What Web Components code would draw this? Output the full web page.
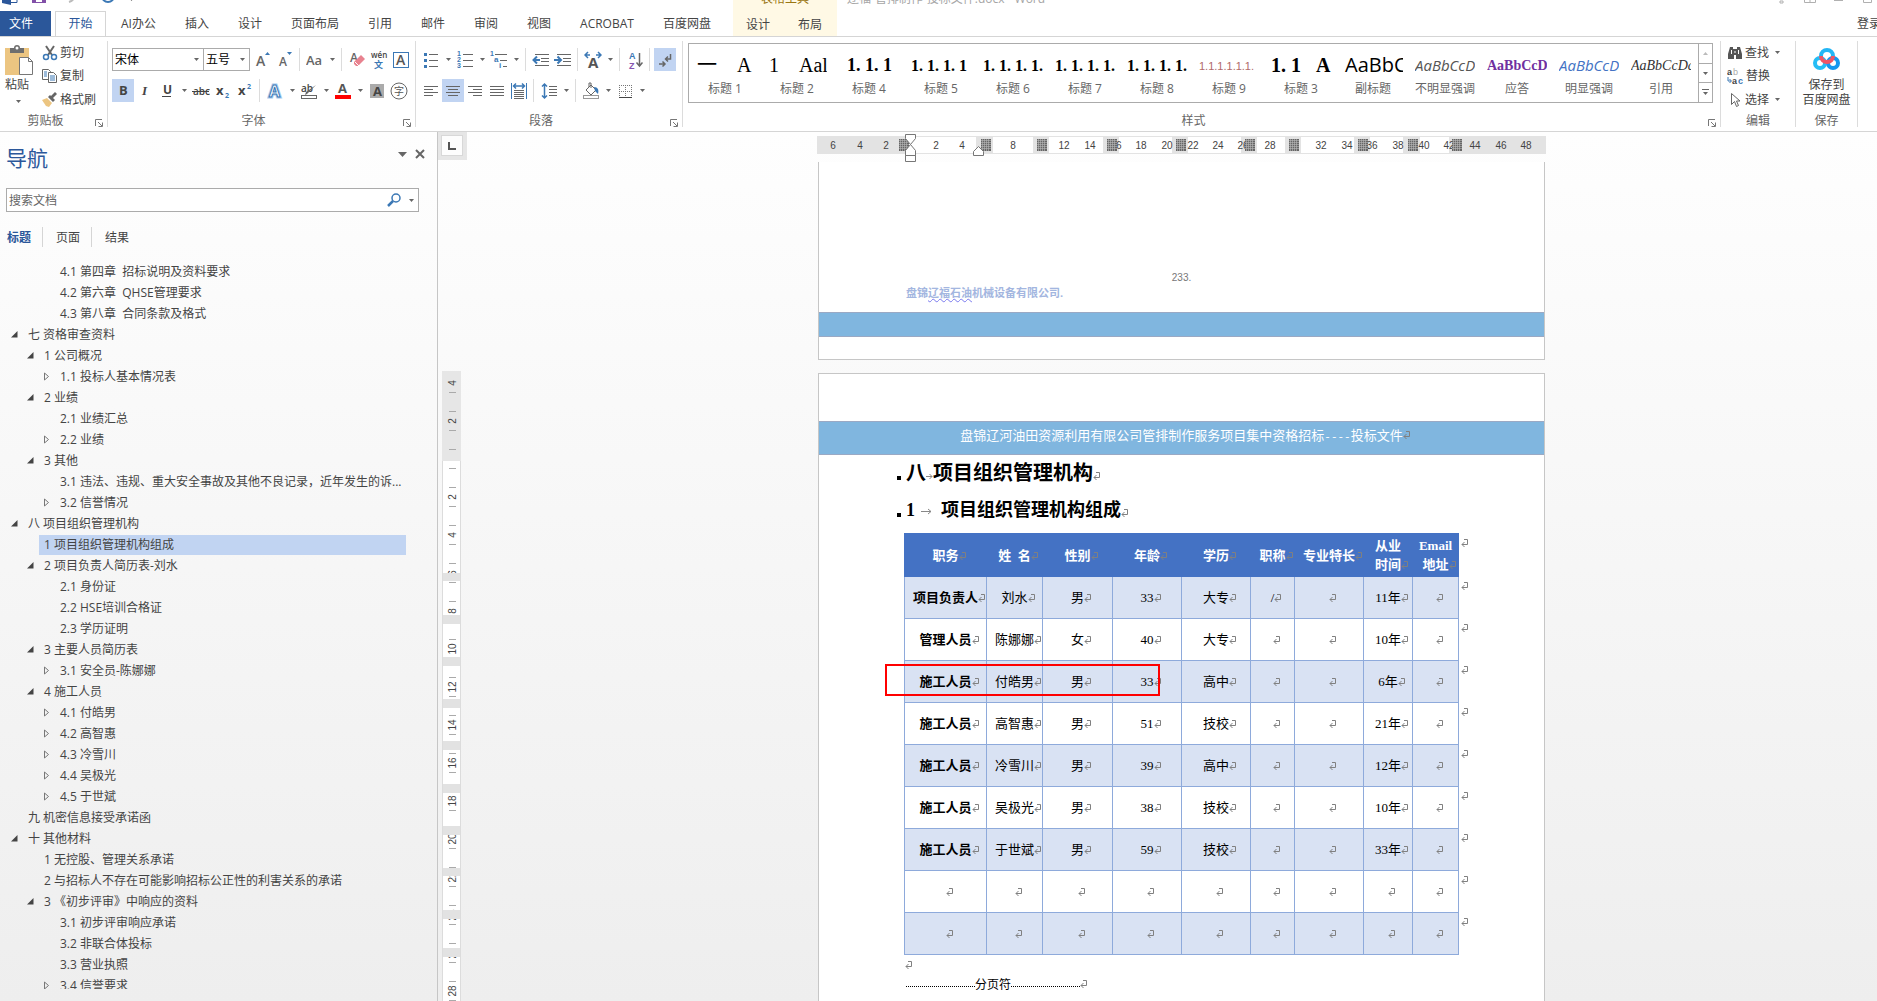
<!DOCTYPE html>
<html lang="zh-CN">
<head>
<meta charset="utf-8">
<title>Word</title>
<style>
html,body{margin:0;height:100%}
body{overflow:hidden;font:12px/16px "Open Sans","Noto Sans CJK SC",sans-serif;color:#444;background:#fff}
</style>
</head>
<body>
<word-app></word-app>
<script>
const BASE = `*{box-sizing:border-box}button,input,select{font:inherit;color:inherit;margin:0}button{border:0;background:none;padding:0;display:inline-flex;align-items:center;white-space:nowrap}svg{display:block;flex:none}`;
function define(name, css, html, after) {
  customElements.define(name, class extends HTMLElement {
    connectedCallback() {
      if (this.shadowRoot) return;
      const root = this.attachShadow({mode: 'open'});
      root.innerHTML = `<style>${BASE}${css}</style>` + (typeof html === 'function' ? html(this) : html);
      if (after) after(this, root);
    }
  });
}
const svg = (w, h, body) => `<svg width="${w}" height="${h}" viewBox="0 0 ${w} ${h}" fill="none" aria-hidden="true">${body}</svg>`;
const G = '#666', B = '#3b78b5';
const T = (x, y, s, size, fill = G, more = '') => `<text x="${x}" y="${y}" font-size="${size}" fill="${fill}" ${more}>${s}</text>`;
const lines = (arr, c = G) => arr.map(([x, y, w]) => `<rect x="${x}" y="${y}" width="${w}" height="1" fill="${c}"/>`).join('');
const caret = svg(5, 3, `<path d="M0 0h5L2.500 3z" fill="${G}"/>`);
const LS = 'font-family="Liberation Sans"';
const ICONS = {
  grow: svg(16,18,T(1,15,'A',14,G,'font-weight="600"')+`<path d="M10 4l2.500-3 2.500 3z" fill="${B}"/>`),
  shrink: svg(16,18,T(2,15,'A',12,G,'font-weight="600"')+`<path d="M10 1h5l-2.500 3z" fill="${B}"/>`),
  aa: svg(18,18,T(0,14,'Aa',13,G,'font-weight="600"')),
  eraser: svg(16,18,T(1,11,'A',12,G,'font-weight="600"')+`<path d="M5 11l7-7 4 4-7 7H7l-2-2z" fill="#e8828f"/><path d="M6 11l4 4" stroke="#fff"/>`),
  wen: svg(18,20,T(1,8,'wén',8,'#444','font-weight="600"')+`<text x="4" y="18" font-size="9" font-weight="700" fill="${B}">文</text>`),
  box: svg(16,18,`<rect x=".5" y="1.500" width="15" height="15" stroke="${B}"/>`+T(3,14,'A',14,'#555','font-weight="600"')),
  bold: svg(16,18,T(4,13,'B',13,'#444','font-weight="700"')),
  italic: svg(16,18,T(5,13,'I',13,'#444','font-weight="700" font-style="italic" font-family="Liberation Serif"')),
  under: svg(16,18,T(4,12,'U',12,'#444','font-weight="700"')+lines([[3,14,9]],'#444')),
  strike: svg(18,18,T(1,13,'abc',10,'#444','font-weight="600"')+lines([[0,9,17]],'#444')),
  sub: svg(16,18,T(1,13,'x',13,'#444','font-weight="700"')+T(10,16,'2',7,B,'font-weight="700"')),
  sup: svg(16,18,T(1,13,'x',13,'#444','font-weight="700"')+T(10,7,'2',7,B,'font-weight="700"')),
  glow: svg(16,18,`<text x="2" y="15" font-size="16" font-weight="700" fill="#fff" stroke="#a9cbee" stroke-width="3">A</text><text x="2" y="15" font-size="16" font-weight="700" fill="#fff" stroke="${B}">A</text>`),
  mark: svg(16,18,T(0,10,'ab',10,'#444','font-weight="600"')+`<path d="M15 3L6 12l-2 1 1-3z" fill="${G}"/><rect x=".5" y="13.500" width="15" height="3" fill="#fff" stroke="${G}"/>`),
  color: svg(16,18,T(3,11,'A',13,'#555','font-weight="700"')+`<rect y="13" width="16" height="4" fill="red"/>`),
  shade: svg(16,18,`<rect x="1" y="2" width="14" height="14" fill="#ababab"/>`+T(4,14,'A',13,'#444','font-weight="700"')),
  circ: svg(18,18,`<circle cx="9" cy="9" r="8" stroke="${G}"/><text x="4" y="13" font-size="10" fill="#555">字</text>`),
  bullets: svg(16,18,[3,9,15].map(y=>`<rect x="1" y="${y-1}" width="3" height="3" fill="${B}"/>`).join('')+lines([[6,3,9],[6,9,9],[6,15,9]])),
  nums: svg(16,18,[1,2,3].map((n,i)=>T(0,5+i*6,n,7,B,'font-weight="700" '+LS)).join('')+lines([[6,3,10],[6,9,10],[6,15,10]])),
  multi: svg(18,18,T(0,5,'1',7,B,'font-weight="700" '+LS)+T(4,11,'a',8,B,'font-weight="700" '+LS)+T(9,17,'i',8,B,'font-weight="700" '+LS)+lines([[5,3,12],[10,9,7],[13,15,4]])),
  outdent: svg(18,18,lines([[3,3,14],[9,7,8],[9,10,8],[3,14,14]])+`<path d="M1 9h7M5 5.500L1.500 9 5 12.500" stroke="${B}" stroke-width="2"/>`),
  indent: svg(18,18,lines([[3,3,14],[9,7,8],[9,10,8],[3,14,14]])+`<path d="M0 9h7M3.500 5.500L7 9l-3.500 3.500" stroke="${B}" stroke-width="2"/>`),
  scale: svg(18,18,T(4,17,'A',15,'#555','font-weight="700"')+`<path d="M1 4h5M4 1L1 4l3 3M17 4h-5M14 1l3 3-3 3" stroke="${B}" stroke-width="1.500"/>`),
  sort: svg(16,18,T(2,8,'A',9,B,'font-weight="700" '+LS)+T(2,18,'Z',9,'#8655b0','font-weight="700" '+LS)+`<path d="M12.500 2v13M9.500 11.500l3 3.500 3-3.500" stroke="${G}" stroke-width="1.500"/>`),
  para: svg(16,18,`<path d="M13.500 3v5H9M11 5.500L8.500 8l2.500 2.500M2 13h6M5.500 10.500L8 13l-2.500 2.500" stroke="${G}" stroke-width="1.500"/>`),
  left: svg(16,18,lines([[1,4,14],[1,7,9],[1,10,14],[1,13,9]])),
  center: svg(16,18,lines([[1,4,14],[3,7,10],[1,10,14],[3,13,10]])),
  right: svg(16,18,lines([[1,4,14],[6,7,9],[1,10,14],[6,13,9]])),
  just: svg(16,18,lines([[1,4,14],[1,7,14],[1,10,14],[1,13,14]])),
  dist: svg(16,18,`<path d="M.5 1v16M15.500 1v16" stroke="${B}"/><path d="M3 4h10M5 1.500L2.500 4 5 6.500M11 1.500L13.500 4 11 6.500" stroke="${B}" stroke-width="1.500"/>`+lines([[3,8,10],[3,10,10],[3,12,10],[3,14,10],[3,16,10]])),
  space: svg(16,18,`<path d="M3.500 2v14M1 4.500L3.500 2 6 4.500M1 13.500L3.500 16 6 13.500" stroke="${B}" stroke-width="1.500"/>`+lines([[8,4,8],[8,7,8],[8,10,8],[8,13,8]])),
  bucket: svg(18,18,`<path d="M4 8l5-5 5 5-5 5zM7 5V1h2v5" stroke="${G}"/><path d="M12 5c4 0 5 3 4 7l-3-3z" fill="${B}"/><rect x="1.500" y="13.500" width="15" height="3" stroke="#999"/>`),
  borders: svg(14,18,`<path d="M1 3.500h13M1 9.500h13M1.500 3v12M7.500 3v12M13.500 3v12" stroke="#777" stroke-dasharray="1 1"/><path d="M1 15.500h13" stroke="#444"/>`),
  paste: svg(28,30,`<path d="M0 3h24v27H0z" fill="#ecc581"/><path d="M5 8V3h4a3 3 0 016 0h4v5z" fill="#6e6e6e"/><circle cx="12" cy="3" r="1.500" fill="#fff"/><path d="M14.500 12.500h9l4 4v13h-13z" fill="#fff" stroke="#777"/><path d="M23.500 12.500v4h4" stroke="#777"/>`),
  cut: svg(16,16,`<path d="M4 1l6 9M12 1L6 10" stroke="${G}" stroke-width="2"/><circle cx="4" cy="12" r="2.500" stroke="${B}" stroke-width="1.500"/><circle cx="12" cy="12" r="2.500" stroke="${B}" stroke-width="1.500"/>`),
  copy: svg(16,16,`<path d="M.5 1.500h6l2 2v8h-8z" fill="#fff" stroke="${G}"/><path d="M6.500 4.500h5l3 3v7h-8z" fill="#fff" stroke="${G}"/><path d="M2 4h3M2 6h3M2 8h3M8 8h5M8 10h5M8 12h5" stroke="${B}"/>`),
  brush: svg(16,16,`<path d="M0 8l5-2 5 5-3 4-3-1z" fill="#ecc581"/><path d="M6 5l5 5 2-2-2-2 4-4-2-2-4 4-1-1z" fill="${G}"/>`),
  find: svg(16,16,`<path d="M3 2h3v2h4V2h3l2 7v5H9v-4H7v4H1V9z" fill="#555"/><path d="M4.500 5v4M11.500 5v4M7 7h2" stroke="#fff"/>`),
  replace: svg(17,16,T(0,7,'a',9,'#444','font-weight="700" '+LS)+T(6,7,'b',9,'#aaa',LS)+T(5,16,'a',9,'#444','font-weight="700" '+LS)+T(11,16,'c',9,B,'font-weight="700" '+LS)+`<path d="M1 9v4h3M2.500 11l2 2-2 2" stroke="${B}"/>`),
  select: svg(16,16,`<path d="M4.500 1.500v11l3-3 2 5 2-1-2-4.500h3.500z" fill="#fff" stroke="${G}"/>`),
  cloud: svg(28,22,`<circle cx="7" cy="15" r="5" stroke="#25bdf5" stroke-width="4"/><circle cx="20" cy="15" r="5" stroke="#1597ef" stroke-width="4"/><path d="M8 8a6 6 0 0112 0" stroke="#22b6f5" stroke-width="4"/><path d="M8 8a6 6 0 0012 0" stroke="#f05565" stroke-width="4"/>`)
};
const RET = `<svg class="ret" width="7" height="9" viewBox="0 0 7 9" fill="none" aria-hidden="true"><path d="M3 .5h3.500v5H1M3.500 3L1 5.500 3.500 8" stroke="#808080"/></svg>`;

define('tool-button', `:host{display:flex;height:23px}button{height:23px;width:22px;justify-content:center}.d{width:12px}:host([active]) button{background:#c1d4f2}`,
  el => `<button aria-label="${el.getAttribute('icon')}">${ICONS[el.getAttribute('icon')]}</button>` + (el.hasAttribute('drop') ? `<button class="d" aria-label="选项">${caret}</button>` : ''));
define('tool-sep', `:host{display:block;width:1px;height:23px;background:#dcdcdc;margin:0 4px 0 3px}`, '');
define('label-button', `:host{display:block}button{height:23px;gap:2px}.c{margin-left:4px}`,
  el => `<button>${ICONS[el.getAttribute('icon')]}<slot></slot>${el.hasAttribute('drop') ? `<span class="c">${caret}</span>` : ''}</button>`);
define('ribbon-group', `:host{display:flex;flex-direction:column;position:relative;height:94px;padding:4px 0}
 .in{flex:1;border-right:1px solid #dcdcdc;display:flex;flex-direction:column}.body{flex:1}
 .lab{height:15px;line-height:18px;text-align:center;color:#666;position:relative}:host([launcher]) .lab{padding-right:16px}.lab button{position:absolute;right:4px;bottom:0}`,
  el => `<div class="in"><div class="body"><slot></slot></div><div class="lab">${el.getAttribute('label')}${el.hasAttribute('launcher') ? `<button aria-label="更多">${svg(8,8,`<path d="M.5 7V.5H7M3 3l4 4M7.500 3.500v4h-4" stroke="#777"/>`)}</button>` : ''}</div></div>`);

define('app-header', `:host{display:flex;height:37px;border-bottom:1px solid #d5d5d5}
 .col{display:flex;flex-direction:column}.top{height:12px;overflow:hidden;display:flex;align-items:flex-end}.top>*{height:24px;line-height:22px;flex:none}
 .tabs{display:flex;height:25px}.tabs button{padding:2px 14px 0 15px;height:24px}
 .tabs .file{background:#2b579a;color:#fff;padding:0 9px 0 0;width:51px;height:25px;justify-content:center}
 .tabs .on{margin-left:4px;border:1px solid #d5d5d5;border-bottom:0;background:#fff;color:#2b579a;height:25px;width:51px;padding:0;justify-content:center}
 .a{width:733px}.b{background:#fff9e5;width:104px;height:36px}.b .top{justify-content:center;color:#9a7612}.b .tabs button{padding:2px 13px 0;width:53px}
 .c{flex:1;min-width:0}.c .top{padding-left:10px;color:#a6a6a6;justify-content:space-between}.c .login{display:flex;justify-content:flex-end;height:24px;padding-left:0;overflow:hidden}.login button{width:20px}`,
 `<div class="col a"><div class="top">${svg(140,24,`<path d="M2 6l9-2v14l-9-2z" fill="#2b579a"/><path d="M11 6.500h6v9h-6M12 9h4M12 12h4" stroke="#2b579a"/><path d="M32 4h14v12H32z" fill="#8250a8"/><path d="M36 12h6v3h-6z" fill="#fff"/><path d="M69 15q6-2 5-7" stroke="#bbb" stroke-width="2"/><path d="M102 9a6 6 0 1012 0" stroke="${B}" stroke-width="2"/><path d="M129 11h5l-2.500 3z" fill="${G}"/>`)}</div>
 <nav class="tabs"><button class="file">文件</button><button class="on">开始</button>${['AI办公','插入','设计','页面布局','引用','邮件','审阅','视图','ACROBAT','百度网盘'].map(t=>`<button>${t}</button>`).join('')}</nav></div>
 <div class="col b"><div class="top"><span>表格工具</span></div><div class="tabs"><button>设计</button><button>布局</button></div></div>
 <div class="col c"><div class="top"><span>辽福-管排制作-投标文件.docx - Word</span>${svg(100,24,`<path d="M3 13h3v2H3zM27.500 6v8.500h11V6M33 8v6M57 12.500h9M86.500 6v8.500h8V6" stroke="#b0b0b0"/>`)}</div><div class="login"><button>登录</button></div></div>`);

const N = '&nbsp;';
const styles = [['标题 1',`一${N.repeat(4)}A`,'serif'],['标题 2',`1${N.repeat(4)}Aal`,'serif'],['标题 4',`1.${N}1.${N}1`,'b18'],['标题 5',`1.${N}1.${N}1.${N}1`,'b15'],['标题 6',`1.${N}1.${N}1.${N}1.`,'b15'],['标题 7',`1.${N}1.${N}1.${N}1.`,'b15'],['标题 8',`1.${N}1.${N}1.${N}1.`,'b15'],['标题 9','1.1.1.1.1.1.','thin'],['标题 3',`1.${N}1${N.repeat(3)}A`,'b20'],['副标题','AaBbC','sub'],['不明显强调','AaBbCcD','em'],['应答','AaBbCcD','ans'],['明显强调','AaBbCcD','em2'],['引用','AaBbCcDd','quote']];
define('style-gallery', `:host{display:flex;margin:2px 7px 0 5px;height:60px;border:1px solid #ababab}
 .items{flex:1;display:flex;overflow:hidden}.items button{width:72px;flex:none;flex-direction:column;padding:6px 6px 0 6px;color:#666;height:56px}
 .p{height:28px;line-height:30px;width:60px;overflow:hidden;text-align:left;color:#000;display:block}.l{height:20px;line-height:22px}
 .serif{font:20px/30px "Liberation Serif","Noto Sans CJK SC",serif;padding-left:2px}.b18{font:bold 18px/31px "Liberation Serif",serif;padding-left:8px}.b15{font:bold 16px/31px "Liberation Serif",serif}
 .b20{font:bold 20px/30px "Liberation Serif",serif}.thin{font:11px/32px "Liberation Sans",sans-serif;color:#b06a6a}
 .sub{font-size:20px;padding-left:2px}.em{font-size:15px;font-style:italic;color:#555}.ans{font:bold 14px/32px "Liberation Serif",serif;color:#7030a0}.em2{font-size:15px;font-style:italic;color:#4472c4}.quote{font:italic 14px/32px "Liberation Serif",serif;color:#333}
 .sc{width:14px;border-left:1px solid #ababab;display:flex;flex-direction:column}.sc button{flex:1;justify-content:center;border-bottom:1px solid #ababab}.sc button:last-child{border:0}`,
 `<div class="items">${styles.map(s=>`<button><span class="p ${s[2]}">${s[1]}</span><span class="l">${s[0]}</span></button>`).join('')}</div>
 <div class="sc"><button aria-label="上">${svg(5,3,'<path d="M0 3h5L2.500 0z" fill="#bbb"/>')}</button><button aria-label="下">${caret}</button><button aria-label="展开">${svg(7,7,`<path d="M0 .5h7" stroke="${G}"/><path d="M1 3h5L3.500 6z" fill="${G}"/>`)}</button></div>`);

const tb = (i, f='') => `<tool-button icon="${i}" ${f}></tool-button>`, sp = '<tool-sep></tool-sep>';
define('word-ribbon', `:host{display:flex;height:95px;border-bottom:1px solid #d5d5d5;background:#fff}
 .clip{width:108px}.font{width:308px}.par{width:267px}.sty{flex:1;min-width:0}.edit{width:75px}.save{width:62px;margin-right:19px}
 .row{display:flex;height:23px;margin-top:7px}.row+.row{margin-top:8px}.font .row,.par .row{padding-left:4px}
 .cl{display:flex;padding:0 0 0 5px;gap:9px}.pb{flex-direction:column;width:28px;padding-top:4px;gap:2px;align-items:flex-start}.pb i{padding:5px 0 0 11px}.pb span{line-height:16px}
 .cmb{display:flex;align-items:center;height:23px;border:1px solid #ababab;position:relative;color:#000}.cmb select{appearance:none;border:0;background:none;width:100%;height:21px;padding:0 2px}.cmb svg{position:absolute;right:4px;top:9px;pointer-events:none}
 .n{width:92px}.z{width:47px;margin:0 2px 0 -1px}
 .e{padding-left:6px}.sv{flex-direction:column;width:61px;padding-top:7px;line-height:15px}.sv svg{margin-bottom:7px}`,
 `<ribbon-group class="clip" label="剪贴板" launcher><div class="cl"><button class="pb">${ICONS.paste}<span>粘贴</span><i>${caret}</i></button><div><label-button icon="cut">剪切</label-button><label-button icon="copy">复制</label-button><label-button icon="brush">格式刷</label-button></div></div></ribbon-group>
 <ribbon-group class="font" label="字体" launcher><div class="row"><label class="cmb n"><select aria-label="字体"><option>宋体</option></select>${caret}</label><label class="cmb z"><select aria-label="字号"><option>五号</option></select>${caret}</label>${tb('grow')}${tb('shrink')}${sp}${tb('aa','drop')}${sp}${tb('eraser')}${tb('wen')}${tb('box')}</div>
 <div class="row">${tb('bold','active')}${tb('italic')}${tb('under','drop')}${tb('strike')}${tb('sub')}${tb('sup')}${sp}${tb('glow','drop')}${tb('mark','drop')}${tb('color','drop')}${tb('shade')}${tb('circ')}</div></ribbon-group>
 <ribbon-group class="par" label="段落" launcher><div class="row">${tb('bullets','drop')}${tb('nums','drop')}${tb('multi','drop')}${sp}${tb('outdent')}${tb('indent')}${sp}${tb('scale','drop')}${sp}${tb('sort')}${sp}${tb('para','active')}</div>
 <div class="row">${tb('left')}${tb('center','active')}${tb('right')}${tb('just')}${tb('dist')}${sp}${tb('space','drop')}${sp}${tb('bucket','drop')}${tb('borders','drop')}</div></ribbon-group>
 <ribbon-group class="sty" label="样式" launcher><style-gallery></style-gallery></ribbon-group>
 <ribbon-group class="edit" label="编辑"><div class="e"><label-button icon="find" drop>查找</label-button><label-button icon="replace">替换</label-button><label-button icon="select" drop>选择</label-button></div></ribbon-group>
 <ribbon-group class="save" label="保存"><button class="sv">${ICONS.cloud}<span>保存到</span><span>百度网盘</span></button></ribbon-group>`);

const TREE = `2 -4.1 第四章  招标说明及资料要求
2 -4.2 第六章  QHSE管理要求
2 -4.3 第八章  合同条款及格式
0 v七 资格审查资料
1 v1 公司概况
2 >1.1 投标人基本情况表
1 v2 业绩
2 -2.1 业绩汇总
2 >2.2 业绩
1 v3 其他
2 -3.1 违法、违规、重大安全事故及其他不良记录，近年发生的诉...
2 >3.2 信誉情况
0 v八 项目组织管理机构
1 *1 项目组织管理机构组成
1 v2 项目负责人简历表-刘水
2 -2.1 身份证
2 -2.2 HSE培训合格证
2 -2.3 学历证明
1 v3 主要人员简历表
2 >3.1 安全员-陈娜娜
1 v4 施工人员
2 >4.1 付皓男
2 >4.2 高智惠
2 >4.3 冷雪川
2 >4.4 吴极光
2 >4.5 于世斌
0 -九 机密信息接受承诺函
0 v十 其他材料
1 -1 无控股、管理关系承诺
1 -2 与招标人不存在可能影响招标公正性的利害关系的承诺
1 v3 《初步评审》中响应的资料
2 -3.1 初步评审响应承诺
2 -3.2 非联合体投标
2 -3.3 营业执照
2 >3.4 信誉要求`.split('\n').map(l => ({lv: +l[0], k: l[2], t: l.slice(3)}));
define('nav-tree', `:host{display:block;overflow:hidden}ul{list-style:none;margin:0;padding:0}li{height:21px;line-height:21px;display:flex;align-items:center;white-space:pre}
 .m{width:17px;flex:none}.l0{padding-left:11px}.l1{padding-left:27px}.l2{padding-left:43px}.sel{background:linear-gradient(#c1d4f2,#c1d4f2) 39px 50%/367px 20px no-repeat}`,
 `<ul>${TREE.map(r=>`<li class="l${r.lv}${r.k=='*'?' sel':''}"><span class="m">${r.k=='v'?svg(7,7,'<path d="M6.500 0v6.500H0z" fill="#444"/>'):r.k=='>'?svg(7,9,'<path d="M1.500 1l4 3.500-4 3.500z" stroke="#777"/>'):''}</span><span>${r.t}</span></li>`).join('')}</ul>`);
define('nav-pane', `:host{display:flex;flex-direction:column;width:438px;flex:none;border-right:1px solid #c6c6c6;padding-bottom:12px}
 header{display:flex;align-items:center;height:52px;padding:0 12px 0 6px}h2{margin:0;flex:1;font-size:21px;font-weight:400;color:#2b579a;line-height:28px}header button{margin-left:8px;height:28px;align-items:flex-start;padding-top:5px}
 label{margin:4px 18px 0 6px;height:24px;border:1px solid #ababab;background:#fff;display:flex;align-items:center;padding:0 4px 0 2px;gap:8px}input{flex:1;border:0;outline:0;background:none;padding:0;height:20px}input::placeholder{color:#666;opacity:1}
 .tabs{display:flex;margin:15px 0 14px 7px;height:20px}.tabs button{padding:1px 11px 0 0;margin-right:13px;border-right:1px solid #d5d5d5}.tabs button:first-child{font-weight:700;color:#2b579a}.tabs button:last-child{border:0}nav-tree{flex:1;min-height:0}`,
 `<header><h2>导航</h2><button aria-label="选项">${svg(9,12,`<path d="M0 3h9L4.500 8z" fill="${G}"/>`)}</button><button aria-label="关闭">${svg(10,10,`<path d="M1 1l8 8M9 1L1 9" stroke="${G}" stroke-width="2"/>`)}</button></header>
 <label><input aria-label="搜索文档" placeholder="搜索文档">${svg(14,14,`<circle cx="9" cy="5" r="4" stroke="${B}" stroke-width="1.500"/><path d="M6 8l-5 5" stroke="${B}" stroke-width="2.500"/>`)}${caret}</label>
 <div class="tabs"><button>标题</button><button>页面</button><button>结果</button></div><nav-tree></nav-tree>`);

define('v-ruler', `:host{display:flex;flex-direction:column;width:29px;flex:none;overflow:hidden}.corner{height:28px;flex:none;background:#e6e6e6;padding:3px 4px 4px 3px}.corner div{background:#fdfdfd;border:1px solid #d8d8d8;height:21px;display:grid;place-items:center}text{font:10px "Liberation Sans",sans-serif}svg{display:block}`,
 () => {
  let s = '<rect x="4" y="371" width="19" height="90" fill="#e6e6e6"/><rect x="4" y="461" width="19" height="560" fill="#fff"/>';
  for (let y = 392; y < 1001; y += 19) s += `<rect x="11" y="${y}" width="7" height="1" fill="#aaa"/>`;
  const n = [['4',383],['2',421]]; for (let i = 1; i <= 14; i++) n.push([i*2, 459 + i*38]);
  n.forEach(([t,y]) => s += `<rect x="11" y="${y-6}" width="8" height="12" fill="${y<461?'#e6e6e6':'#fff'}"/><text transform="translate(18 ${y}) rotate(-90)" text-anchor="middle" fill="#444">${t}</text>`);
  [[573,8],[615,9],[657,9],[699,9],[741,9],[784,9],[826,9],[868,8],[910,9],[948,9]].forEach(([y,h]) => s += `<rect x="4" y="${y}" width="19" height="${h}" fill="#e2e2e2"/>`);
  s += '<path d="M4.500 461v540M22.500 461v540" stroke="#dcdcdc"/>';
  return `<div class="corner"><div>${svg(8,8,'<path d="M1 0v7h7" stroke="#555" stroke-width="2"/>')}</div></div><svg width="29" height="841" viewBox="0 160 29 841" fill="none">${s}</svg>`;
 });
define('h-ruler', `:host{display:block;width:729px;height:30px;padding-top:2px}svg{overflow:visible}text{font:10px "Liberation Sans",sans-serif}`,
 () => {
  let s = '<rect x="817" y="136" width="729" height="18" fill="#e3e3e3"/>';
  const seg = [[909,976],[993,1033],[1049,1103],[1119,1172],[1188,1241],[1257,1285],[1301,1354],[1370,1403],[1420,1449]];
  seg.forEach(([a,b]) => s += `<rect x="${a}" y="137" width="${b-a}" height="16" fill="#fff"/>`);
  [[6,833],[4,860],[2,886],[2,936],[4,962],[8,1013],[12,1064],[14,1090],[16,1116],[18,1141],[20,1167],[22,1193],[24,1218],[26,1243],[28,1270],[32,1321],[34,1347],[36,1372],[38,1398],[40,1424],[42,1449],[44,1475],[46,1501],[48,1526]].forEach(([t,x]) => s += `<text x="${x}" y="149" text-anchor="middle" fill="#444">${t}</text>`);
  [899,981,1037,1107,1176,1245,1289,1358,1408,1452].forEach(x => { s += `<rect x="${x}" y="139" width="10" height="12" fill="#666"/>`; for (let i=2;i<10;i+=2) s += `<path d="M${x+i-.5} 139v12" stroke="#bbb" stroke-width=".6"/>`; for (let j=2;j<12;j+=2) s += `<path d="M${x} ${139+j-.5}h10" stroke="#bbb" stroke-width=".6"/>`; });
  s += '<g fill="#fff" stroke="#777"><path d="M905.500 134.500h10v4l-5 6-5-6z"/><path d="M905.500 155.500v-5l5-6 5 6v5zM905.500 155.500h10v6h-10z"/><path d="M973.500 155.500v-4l5-5 5 5v4z"/></g>';
  return `<svg width="729" height="28" viewBox="817 134 729 28" fill="none">${s}</svg>`;
 });

const H = ['职务','姓&nbsp;&nbsp;名','性别','年龄','学历','职称','专业特长','从业<br>时间','Email<br>地址'];
const R = [['项目负责人','刘水','男','33','大专','/','','11年',''],['管理人员','陈娜娜','女','40','大专','','','10年',''],['施工人员','付皓男','男','33','高中','','','6年',''],['施工人员','高智惠','男','51','技校','','','21年',''],['施工人员','冷雪川','男','39','高中','','','12年',''],['施工人员','吴极光','男','38','技校','','','10年',''],['施工人员','于世斌','男','59','技校','','','33年',''],Array(9).fill(''),Array(9).fill('')];
define('staff-table', `:host{display:block;position:relative;width:570px}table{border-collapse:collapse;table-layout:fixed;width:570px;font:13px/19px "Liberation Serif","Noto Sans CJK SC",serif;color:#000}
 th,td{padding:0;border:1px solid #8eaadb;text-align:center;white-space:nowrap;overflow:visible;height:42px}thead th{background:#4472c4;color:#fff;border-color:#4472c4;height:43px}
 tbody tr:nth-child(odd)>*{background:#d9e2f3}tr>.end{background:none!important;border:0;vertical-align:top;text-align:left;padding:0 0 0 2px;line-height:17px}.ret{display:inline-block;margin-right:-7px;vertical-align:-1px}
 .hl{position:absolute;left:-19px;top:131px;width:275px;height:32px;border:2px solid red}`,
 `<table><colgroup>${[82,56,70,69,69,44,69,49,46,16].map(w=>`<col style="width:${w}px">`).join('')}</colgroup><thead><tr>${H.map(h=>`<th>${h}${RET}</th>`).join('')}<td class="end">${RET}</td></tr></thead>
 <tbody>${R.map(r=>`<tr>${r.map((c,i)=>i?`<td>${c}${RET}</td>`:`<th scope="row">${c}${RET}</th>`).join('')}<td class="end">${RET}</td></tr>`).join('')}</tbody></table><div class="hl"></div>`);

define('doc-page', `:host{display:block;width:727px;background:#fff;border:1px solid #c6c6c6;overflow:hidden}`, '<slot></slot>');
define('doc-canvas', `:host{flex:1;min-width:0;display:flex;flex-direction:column;align-items:center;padding-left:19px;overflow:hidden}
 h-ruler{flex:none}.p1{flex:none;height:198px;border-top:0;margin-bottom:13px}.f{display:flex;flex-direction:column;justify-content:flex-end;height:197px;line-height:15px}
 .no{text-align:center;font:10px/15px "Liberation Sans",sans-serif;color:#777}.co{font-size:11px;font-weight:700;color:#a3b6e0;padding-left:87px}.co u{text-decoration:underline wavy #7a7aee 1px;text-underline-offset:1px}
 .band{background:#80b6df;border:1px solid #9aa9c4;border-width:1px 0;height:25px;margin:12px 0 22px}
 .p2{flex:none;height:700px}.hd{margin:47px 0 0;height:34px;line-height:26px;text-align:center;color:#fff;font-size:13px}.hd .ret{display:inline-block;margin-right:-7px}.hd span{font:11px "Liberation Mono",monospace}
 h1,h2{margin:0;display:flex;align-items:center;color:#000;padding-left:78px;font-family:"Liberation Serif","Noto Sans CJK SC",serif;height:36px;font-size:20px}h2{font-size:18px;height:38px}
 h1:before,h2:before{content:"";width:4px;height:4px;background:#000;margin:10px 5px 0 0}.t1{margin:6px 0 0}.t2{margin:2px 9px 0 6px}h1 .ret,h2 .ret{margin-top:6px}
 staff-table{margin:4px 0 0 85px}.e{height:20px;padding:6px 0 0 86px}.br{display:flex;align-items:center;height:19px;padding-left:87px;color:#000}.br i{width:69px;border-top:1px dotted #000;margin-top:4px}`,
 `<h-ruler></h-ruler>
 <doc-page class="p1"><div class="f"><div class="no">233.</div><div class="co">盘锦<u>辽福石油</u>机械设备有限公司.</div><div class="band"></div></div></doc-page>
 <doc-page class="p2"><div class="band hd">盘锦辽河油田资源利用有限公司管排制作服务项目集中资格招标<span>----</span>投标文件${RET}</div>
 <h1>八${svg(7,7,'<path d="M0 3.500h6M3.500 1L6 3.500 3.500 6" stroke="#888"/>').replace('<svg','<svg class="t1"')}项目组织管理机构${RET}</h1>
 <h2>1${svg(11,7,'<path d="M0 3.500h10M7 1l3 2.500L7 6" stroke="#888"/>').replace('<svg','<svg class="t2"')}项目组织管理机构组成${RET}</h2>
 <staff-table></staff-table><div class="e">${RET}</div><div class="br"><i></i>分页符<i></i>${RET}</div></doc-page>`);

define('word-app', `:host{display:flex;flex-direction:column;height:100vh}app-header,word-ribbon{flex:none}main{flex:1;min-height:0;display:flex;background:linear-gradient(#fefefe,#eee)}`,
 `<app-header></app-header><word-ribbon></word-ribbon><main><nav-pane></nav-pane><v-ruler></v-ruler><doc-canvas></doc-canvas></main>`);
</script>
</body>
</html>
